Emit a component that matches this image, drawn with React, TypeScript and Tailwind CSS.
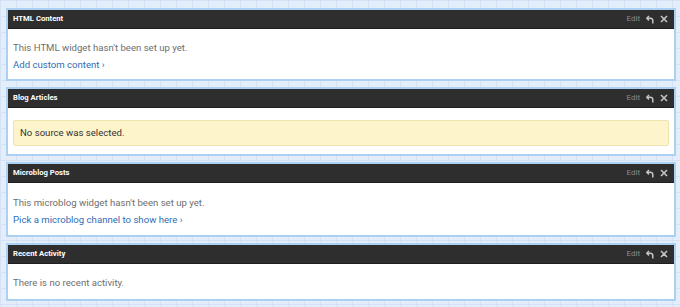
import React from "react";

function UndoIcon() {
  return (
    <svg width="8" height="9" viewBox="0 0 8 9" fill="none">
      <path d="M3 1 L0.8 3.2 L3 5.4" stroke="#c4c4c4" strokeWidth="1.5" strokeLinejoin="miter" />
      <path d="M1 3.2 H4.5 A2.3 2.3 0 0 1 6.8 5.5 V8.5" stroke="#c4c4c4" strokeWidth="1.5" />
    </svg>
  );
}

function CloseIcon() {
  return (
    <svg width="8" height="8" viewBox="0 0 8 8" fill="none">
      <path d="M1 1 L7 7 M7 1 L1 7" stroke="#c4c4c4" strokeWidth="1.6" />
    </svg>
  );
}

function Widget({ title, bodyClass, children }: { title: string; bodyClass: string; children: React.ReactNode }) {
  return (
    <div className="border-2 border-[#acd0f2] bg-white">
      <div className="h-[19px] bg-[#2e2e2e] flex items-center pl-[5px] pr-[6px] border-b border-[#1f1f1f]">
        <span className="text-white font-bold text-[7.7px]" style={{ fontFamily: "Roboto, 'Liberation Sans', sans-serif" }}>
          {title}
        </span>
        <div className="ml-auto flex items-center gap-[6px]">
          <span className="text-[#8a8a8a] text-[8px]" style={{ fontFamily: "Roboto, 'Liberation Sans', sans-serif" }}>Edit</span>
          <UndoIcon />
          <CloseIcon />
        </div>
      </div>
      <div className={bodyClass} style={{ fontFamily: "Roboto, 'Liberation Sans', sans-serif" }}>
        {children}
      </div>
    </div>
  );
}

export default function App() {
  return (
    <div className="w-[680px] h-[307px] overflow-hidden bg-[#e4eefa] bg-[linear-gradient(to_right,#d3e3f5_1px,transparent_1px),linear-gradient(to_bottom,#d3e3f5_1px,transparent_1px)] bg-[size:16px_16px] pt-[8px] pl-[6px] pr-[4px] flex flex-col gap-[6px]">
      <Widget title="HTML Content" bodyClass="pt-[10px] pb-[6px] px-[5px] text-[9.6px] leading-[17px]">
        <div className="text-[#6e6e6e]">This HTML widget hasn't been set up yet.</div>
        <div className="text-[#2f6db5]">Add custom content ›</div>
      </Widget>
      <Widget title="Blog Articles" bodyClass="pt-[12px] pb-[8px] px-[5px] text-[9.6px]">
        <div className="h-[26px] bg-[#fdf4cc] border border-[#f1e3ae] rounded-[2px] flex items-center px-[6px] text-[#333]">
          No source was selected.
        </div>
      </Widget>
      <Widget title="Microblog Posts" bodyClass="pt-[11px] pb-[7px] px-[5px] text-[9.6px] leading-[17px]">
        <div className="text-[#6e6e6e]">This microblog widget hasn't been set up yet.</div>
        <div className="text-[#2f6db5]">Pick a microblog channel to show here ›</div>
      </Widget>
      <Widget title="Recent Activity" bodyClass="pt-[10px] pb-[8px] px-[5px] text-[9.6px] leading-[17px]">
        <div className="text-[#6e6e6e]">There is no recent activity.</div>
      </Widget>
    </div>
  );
}
